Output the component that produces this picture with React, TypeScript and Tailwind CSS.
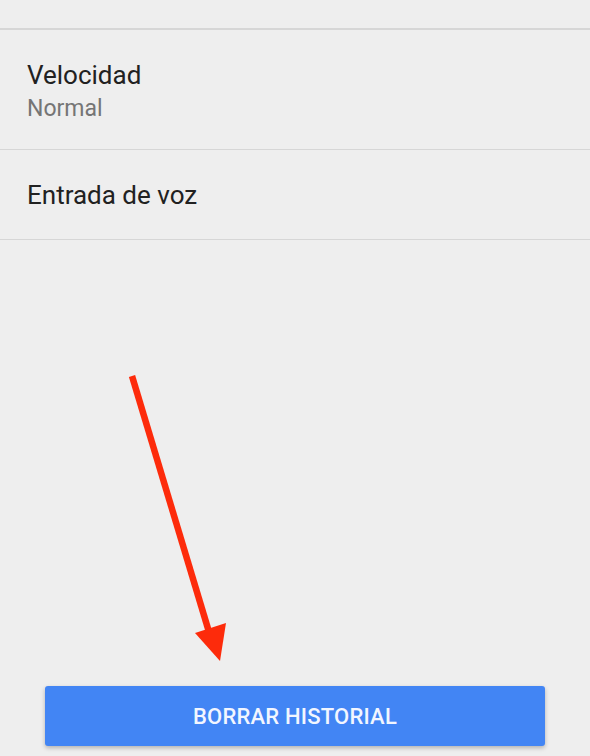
import React from "react";

function Arrow() {
  return (
    <svg
      className="pointer-events-none absolute inset-0"
      width="590"
      height="756"
      viewBox="0 0 590 756"
    >
      <line
        x1="132"
        y1="376"
        x2="209"
        y2="632"
        stroke="#fd2b0b"
        strokeWidth="6.5"
        strokeLinecap="butt"
      />
      <polygon points="195,633 226,623 220,661" fill="#fd2b0b" />
    </svg>
  );
}

export default function App() {
  return (
    <div
      className="relative flex h-[756px] w-[590px] flex-col overflow-hidden bg-[#eeeeee]"
      style={{ fontFamily: "Roboto, 'Noto Sans', sans-serif" }}
    >
      {/* previous row, cut off */}
      <div className="h-[30px] shrink-0 border-b-2 border-[#d6d6d6]" />

      <div className="border-b border-[#d6d6d6] px-[27px] pt-[29px] pb-[26px]">
        <div className="text-[26px] leading-[32px] text-[#212121]">Velocidad</div>
        <div className="mt-[4px] text-[23px] leading-[28px] text-[#757575]">
          Normal
        </div>
      </div>

      <div className="border-b border-[#d6d6d6] px-[27px] pt-[29px] pb-[28px]">
        <div className="text-[26px] leading-[32px] text-[#212121]">
          Entrada de voz
        </div>
      </div>

      <div className="flex-1" />

      <div className="px-[45px] pb-[10px]">
        <button className="flex h-[60px] w-full items-center justify-center rounded-[3px] bg-[#4285f4] text-[22px] font-medium tracking-[0.2px] text-[#f2f6ff] shadow-[0_2px_4px_rgba(0,0,0,0.25)]">
          BORRAR HISTORIAL
        </button>
      </div>

      <Arrow />
    </div>
  );
}
